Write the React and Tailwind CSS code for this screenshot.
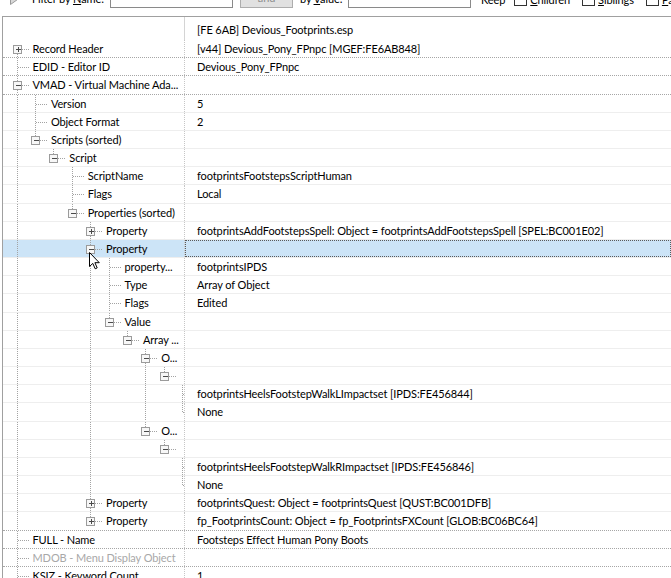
import React from "react";

const rows = [
  { level: 0, kind: "plus", name: "Record Header", value: "[v44] Devious_Pony_FPnpc [MGEF:FE6AB848]" },
  { level: 0, name: "EDID - Editor ID", value: "Devious_Pony_FPnpc" },
  { level: 0, kind: "minus", name: "VMAD - Virtual Machine Ada..." },
  { level: 1, name: "Version", value: "5" },
  { level: 1, name: "Object Format", value: "2" },
  { level: 1, kind: "minus", name: "Scripts (sorted)" },
  { level: 2, kind: "minus", name: "Script" },
  { level: 3, name: "ScriptName", value: "footprintsFootstepsScriptHuman" },
  { level: 3, name: "Flags", value: "Local" },
  { level: 3, kind: "minus", name: "Properties (sorted)" },
  { level: 4, kind: "plus", name: "Property", value: "footprintsAddFootstepsSpell: Object = footprintsAddFootstepsSpell [SPEL:BC001E02]" },
  { level: 4, kind: "minus", name: "Property", selected: true },
  { level: 5, name: "property...", value: "footprintsIPDS" },
  { level: 5, name: "Type", value: "Array of Object" },
  { level: 5, name: "Flags", value: "Edited" },
  { level: 5, kind: "minus", name: "Value" },
  { level: 6, kind: "minus", name: "Array ..." },
  { level: 7, kind: "minus", name: "O..." },
  { level: 8, kind: "minus", name: "" },
  { level: 9, name: "", value: "footprintsHeelsFootstepWalkLImpactset [IPDS:FE456844]" },
  { level: 9, name: "", value: "None" },
  { level: 7, kind: "minus", name: "O..." },
  { level: 8, kind: "minus", name: "" },
  { level: 9, name: "", value: "footprintsHeelsFootstepWalkRImpactset [IPDS:FE456846]" },
  { level: 9, name: "", value: "None" },
  { level: 4, kind: "plus", name: "Property", value: "footprintsQuest: Object = footprintsQuest [QUST:BC001DFB]" },
  { level: 4, kind: "plus", name: "Property", value: "fp_FootprintsCount: Object = fp_FootprintsFXCount [GLOB:BC06BC64]" },
  { level: 0, name: "FULL - Name", value: "Footsteps Effect Human Pony Boots" },
  { level: 0, name: "MDOB - Menu Display Object", dim: true },
  { level: 0, name: "KSIZ - Keyword Count", value: "1" },
  { level: 0, kind: "plus", name: "KWDA - Keywords" },
];

function hasNext(i) {
  const L = rows[i].level;
  for (let j = i + 1; j < rows.length; j++) {
    if (rows[j].level < L) return false;
    if (rows[j].level === L) return true;
  }
  return false;
}

function hasPrev(i) {
  const L = rows[i].level;
  for (let j = i - 1; j >= 0; j--) {
    if (rows[j].level < L) return false;
    if (rows[j].level === L) return true;
  }
  return false;
}

function ancestor(i, l) {
  for (let j = i - 1; j >= 0; j--) if (rows[j].level === l) return j;
  return -1;
}

const col = (l) => Math.round(13.5 + 18.4 * l);
const textX = (l) => 29.5 + 18.4 * l;

function Expander({ x, y, plus }) {
  return (
    <g shapeRendering="crispEdges">
      <rect x={x - 4} y={y - 4} width={8} height={8} fill="#f7f7f7" stroke="#9b9b9b" />
      <line x1={x - 2} x2={x + 3} y1={y} y2={y} stroke="#4a4a4a" />
      {plus && <line x1={x + 0.5} x2={x + 0.5} y1={y - 2.5} y2={y + 2.5} stroke="#4a4a4a" />}
    </g>
  );
}

// lignes de l'arbre, dessinées par ligne
function TreeLines({ i }) {
  const r = rows[i];
  const cy = 9.5;
  const x = col(r.level) + 0.5;
  const lines = [];
  for (let l = 0; l < r.level; l++) {
    const a = ancestor(i, l);
    if (a >= 0 && hasNext(a)) {
      const lx = col(l) + 0.5;
      lines.push(<line key={"v" + l} x1={lx} x2={lx} y1={0} y2={19} />);
    }
  }
  if (r.level > 0 || hasPrev(i)) lines.push(<line key="t" x1={x} x2={x} y1={0} y2={cy} />);
  if (hasNext(i)) lines.push(<line key="b" x1={x} x2={x} y1={cy} y2={19} />);
  lines.push(<line key="h" x1={r.kind ? x + 4 : x} x2={textX(r.level) - 3} y1={cy} y2={cy} />);
  return (
    <svg className="absolute left-0 top-0 pointer-events-none" width="182" height="19">
      <g stroke="#a3a3a3" strokeDasharray="1 1" shapeRendering="crispEdges">{lines}</g>
      {r.kind && <Expander x={x} y={cy} plus={r.kind === "plus"} />}
    </svg>
  );
}

function Row({ i }) {
  const r = rows[i];
  const next = rows[i + 1];
  const dark = r.level === 0 || (next && next.level === 0);
  return (
    <div
      className={
        "flex h-[18.18px] shrink-0 " +
        (dark ? "border-b border-dotted border-[#a6a6a6] " : "border-b border-[#eeeeee] ") +
        (r.selected ? "bg-[#cce4f7]" : "")
      }
    >
      <div className="relative w-[182px] shrink-0 overflow-hidden border-r border-dotted border-[#c6c6c6]">
        <TreeLines i={i} />
        <div
          className={"relative whitespace-nowrap leading-[17px] " + (r.dim ? "text-[#a8a8a8]" : "text-black")}
          style={{ paddingLeft: textX(r.level) }}
        >
          {r.name}
        </div>
      </div>
      <div
        className={
          "flex-1 whitespace-nowrap pl-[12px] leading-[17px] text-black " +
          (r.selected ? "outline-1 outline-dotted outline-[#5a5a5a] -outline-offset-1" : "")
        }
      >
        {r.value}
      </div>
    </div>
  );
}

function Check() {
  return <span className="w-[13px] h-[13px] border border-[#333] bg-white shrink-0" />;
}

export default function App() {
  return (
    <div className="relative w-[671px] h-[578px] overflow-hidden bg-white text-[11px] tracking-[-0.1px] font-['Lato',sans-serif]">
      {/* barre de filtre, coupée en haut */}
      <div className="h-[16px] overflow-hidden">
        <div className="-mt-[14px] flex h-[22px] items-start text-black">
          <svg className="ml-[10px] mt-[9px] shrink-0" width="8" height="10">
            <path d="M0.5 0.5 L7.5 4.5 L0.5 9.5 Z" fill="#d8d8d8" stroke="#9a9a9a" />
          </svg>
          <span className="ml-[14px] mt-[7px] leading-[12px] whitespace-nowrap">
            Filter by <u>N</u>ame:
          </span>
          <div className="absolute left-[110px] top-[-14px] w-[123px] h-[22px] border border-[#8a8a8a] bg-white" />
          <div className="absolute left-[240px] top-[-14px] w-[53px] h-[22px] border border-[#adadad] bg-[#e1e1e1] flex items-end justify-center text-[#8d8d8d] leading-[12px] pb-[3px]">
            and
          </div>
          <span className="absolute left-[300px] top-[-7px] leading-[12px] whitespace-nowrap">
            by <u>V</u>alue:
          </span>
          <div className="absolute left-[348px] top-[-14px] w-[123px] h-[22px] border border-[#8a8a8a] bg-white" />
          <div className="absolute left-[481px] top-[-7px] flex items-center gap-[3px] leading-[12px] whitespace-nowrap">
            <span className="mr-[6px]">Keep</span>
            <Check />
            <span className="mr-[9px]"><u>C</u>hildren</span>
            <Check />
            <span className="mr-[9px]"><u>S</u>iblings</span>
            <Check />
            <span><u>P</u>arents</span>
          </div>
        </div>
      </div>

      {/* arbre */}
      <div className="ml-[2px] flex h-[562px] flex-col border-l border-t border-[#a0a0a0]">
        <div className="flex h-[23px] shrink-0">
          <div className="w-[182px] shrink-0 border-r border-[#d4d4d4]" />
          <div className="flex-1 whitespace-nowrap pl-[12px] pt-[4px] leading-[17px] text-black">
            [FE 6AB] Devious_Footprints.esp
          </div>
        </div>
        {rows.map((r, i) => (
          <Row key={i} i={i} />
        ))}
      </div>

      {/* curseur */}
      <svg className="absolute left-[89px] top-[252px] pointer-events-none" width="13" height="19">
        <path
          d="M0.5 0.5 L0.5 14.5 L3.8 11.4 L6.2 16.8 L8.2 15.9 L5.9 10.7 L10.3 10.7 Z"
          fill="#ffffff"
          stroke="#000000"
          strokeLinejoin="miter"
        />
      </svg>
    </div>
  );
}
